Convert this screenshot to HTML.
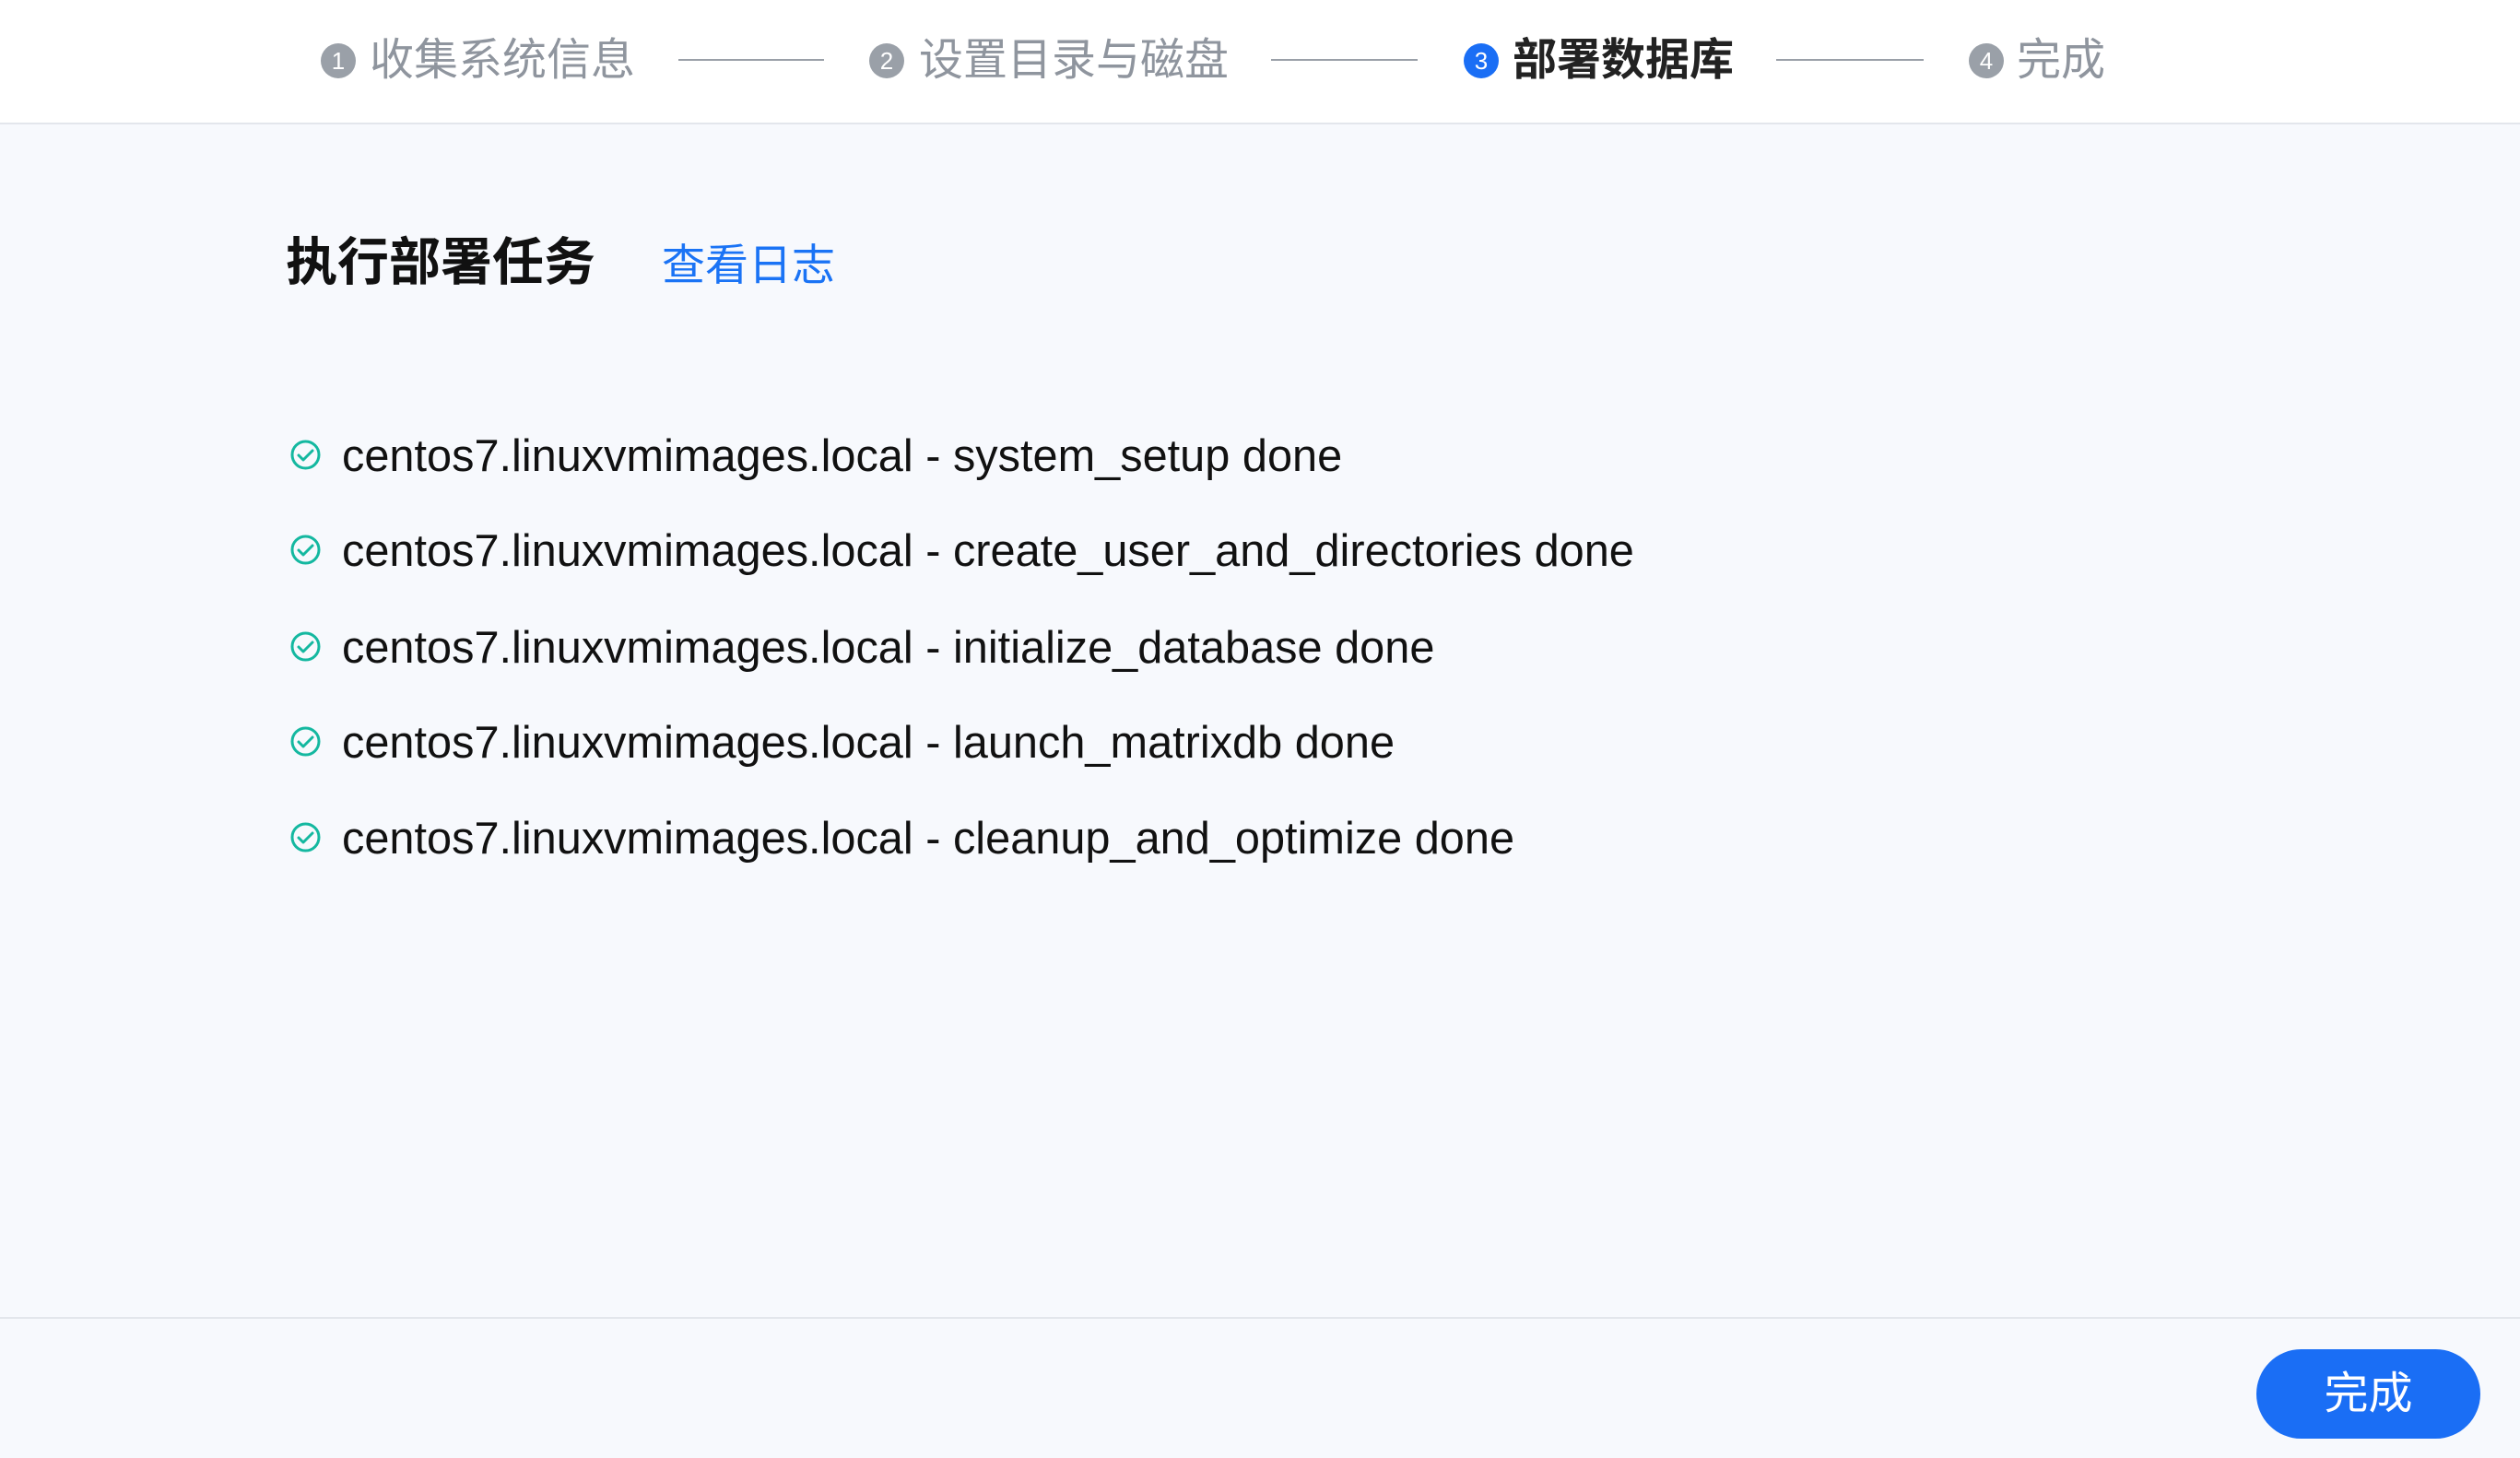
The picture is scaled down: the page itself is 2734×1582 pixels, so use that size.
<!DOCTYPE html>
<html><head><meta charset="utf-8"><style>
html,body{margin:0;padding:0}
body{width:2734px;height:1582px;background:#f7f9fd;position:relative;overflow:hidden;font-family:"Liberation Sans","Noto Sans CJK SC",sans-serif}
.hdr{position:absolute;left:0;top:0;width:2734px;height:133px;background:#fff;border-bottom:2px solid #e3e6ec}
.c{position:absolute;top:47px;width:38px;height:38px;border-radius:50%;background:#9aa0a8;color:#fff;font-size:26px;line-height:38px;text-align:center}
.t{position:absolute;top:34px;font-size:48px;line-height:64px;color:#8f959e;white-space:nowrap}
.ln{position:absolute;top:64px;height:2px;background:#9aa0a8}
.title{position:absolute;left:310px;top:250px;font-size:56px;font-weight:bold;color:#111;line-height:70px}
.log{position:absolute;left:718px;top:253px;font-size:47px;color:#1a73f5;line-height:70px}
.it{position:absolute;left:314px;height:60px;font-size:48.7px;color:#111;white-space:nowrap}
.it svg{position:absolute;left:0;top:13px}
.it span{position:absolute;left:57px;top:2px;line-height:60px}
.ft{position:absolute;left:0;top:1429px;width:2734px;height:2px;background:#e3e6ec}
.btn{position:absolute;left:2448px;top:1464px;width:243px;height:97px;border-radius:49px;background:#1a6ef5;color:#fff;font-size:48px;line-height:97px;text-align:center}
</style></head><body>
<div class="hdr">
<div class="c" style="left:348px">1</div><div class="t" style="left:401px">收集系统信息</div>
<div class="ln" style="left:736px;width:158px"></div>
<div class="c" style="left:943px">2</div><div class="t" style="left:997px">设置目录与磁盘</div>
<div class="ln" style="left:1379px;width:159px"></div>
<div class="c" style="left:1588px;background:#1a6ef5">3</div><div class="t" style="left:1641px;color:#222;font-weight:bold">部署数据库</div>
<div class="ln" style="left:1927px;width:160px"></div>
<div class="c" style="left:2136px">4</div><div class="t" style="left:2188px">完成</div>
</div>
<div class="title">执行部署任务</div>
<div class="log">查看日志</div>
<div class="it" style="top:463px"><svg width="35" height="35" viewBox="0 0 35 35"><circle cx="17.5" cy="17.5" r="14.5" fill="none" stroke="#14b8a0" stroke-width="3"/><path d="M10 18l5 5 10-10" fill="none" stroke="#14b8a0" stroke-width="3" stroke-linecap="round" stroke-linejoin="round"/></svg><span>centos7.linuxvmimages.local - system_setup done</span></div>
<div class="it" style="top:566px"><svg width="35" height="35" viewBox="0 0 35 35"><circle cx="17.5" cy="17.5" r="14.5" fill="none" stroke="#14b8a0" stroke-width="3"/><path d="M10 18l5 5 10-10" fill="none" stroke="#14b8a0" stroke-width="3" stroke-linecap="round" stroke-linejoin="round"/></svg><span>centos7.linuxvmimages.local - create_user_and_directories done</span></div>
<div class="it" style="top:671px"><svg width="35" height="35" viewBox="0 0 35 35"><circle cx="17.5" cy="17.5" r="14.5" fill="none" stroke="#14b8a0" stroke-width="3"/><path d="M10 18l5 5 10-10" fill="none" stroke="#14b8a0" stroke-width="3" stroke-linecap="round" stroke-linejoin="round"/></svg><span>centos7.linuxvmimages.local - initialize_database done</span></div>
<div class="it" style="top:774px"><svg width="35" height="35" viewBox="0 0 35 35"><circle cx="17.5" cy="17.5" r="14.5" fill="none" stroke="#14b8a0" stroke-width="3"/><path d="M10 18l5 5 10-10" fill="none" stroke="#14b8a0" stroke-width="3" stroke-linecap="round" stroke-linejoin="round"/></svg><span>centos7.linuxvmimages.local - launch_matrixdb done</span></div>
<div class="it" style="top:878px"><svg width="35" height="35" viewBox="0 0 35 35"><circle cx="17.5" cy="17.5" r="14.5" fill="none" stroke="#14b8a0" stroke-width="3"/><path d="M10 18l5 5 10-10" fill="none" stroke="#14b8a0" stroke-width="3" stroke-linecap="round" stroke-linejoin="round"/></svg><span>centos7.linuxvmimages.local - cleanup_and_optimize done</span></div>
<div class="ft"></div>
<div class="btn">完成</div>
</body></html>
